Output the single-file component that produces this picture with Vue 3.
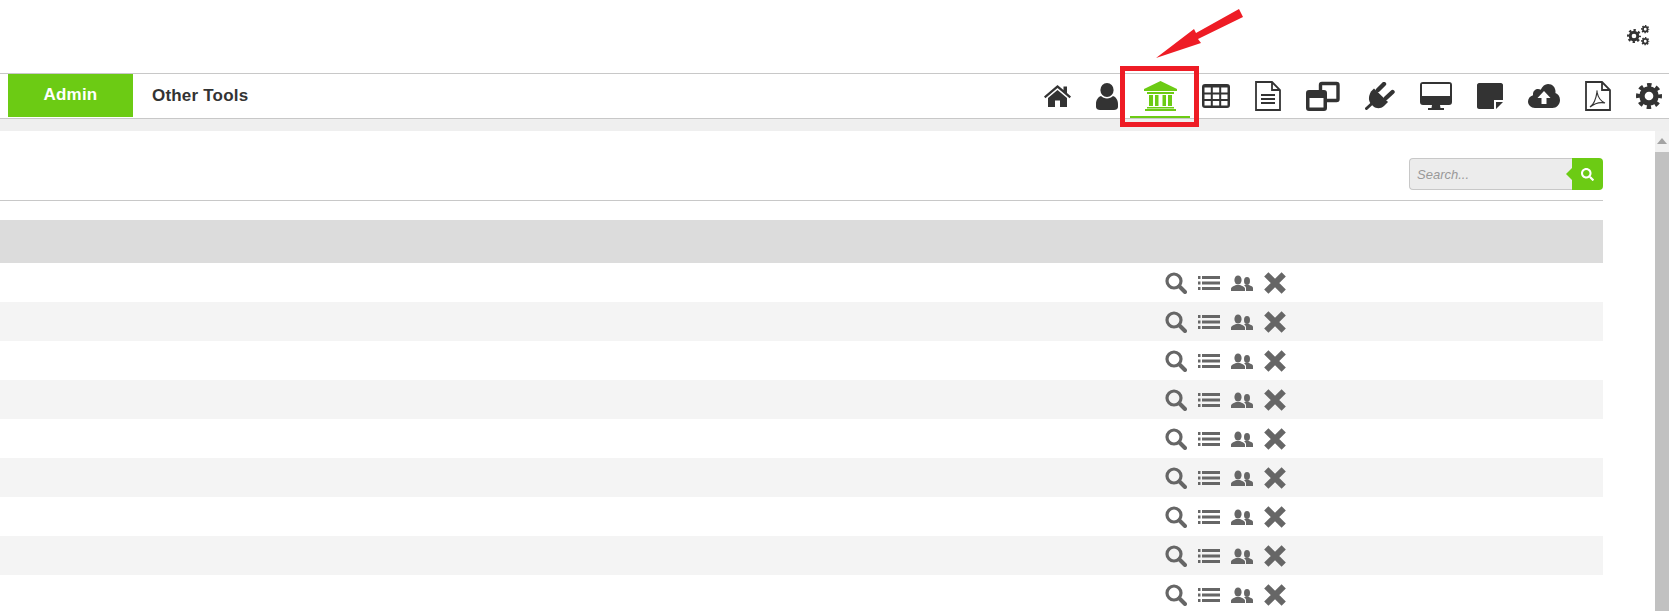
<template>
  <div class="page">
    <header class="top">
      <svg class="gears" viewBox="0 0 23 21" fill="#333">
        <use href="#cog" x="0" y="4" width="14" height="14" />
        <use href="#cog" x="14" y="0" width="8.500" height="8.500" />
        <use href="#cog" x="14" y="12" width="8.500" height="8.500" />
      </svg>
    </header>

    <svg width="0" height="0" class="defs">
      <symbol id="cog" viewBox="0 0 24 24">
        <circle cx="12" cy="12" r="6.500" fill="none" stroke="#333" stroke-width="5" />
        <circle cx="12" cy="12" r="10" fill="none" stroke="#333" stroke-width="4" stroke-dasharray="4 3.850" stroke-dashoffset="2" />
      </symbol>
    </svg>

    <nav class="nav">
      <a class="tab active">Admin</a>
      <a class="tab">Other Tools</a>
      <div class="icons">
        <svg width="27" height="22" viewBox="0 0 27 22" fill="#333"><path d="M13.500 0 0 11.500l1.400 1.700L13.500 3l12.100 10.200 1.400-1.700-4-3.400V1.500h-3.500v3.600zM13.500 5 4 13v9h7v-6.500h5V22h7v-9z" /></svg>
        <svg width="22" height="27" viewBox="0 0 22 27" fill="#333"><ellipse cx="11" cy="7" rx="6.600" ry="7" /><path d="M5 13c-3 1-5 4-5 8v3c0 2 2 3 4 3h14c2 0 4-1 4-3v-3c0-4-2-7-5-8-1.500 1.500-3.500 2.500-6 2.500S6.500 14.500 5 13z" /></svg>
        <a class="bank">
          <svg width="33" height="30" viewBox="0 0 33 30" fill="#6ccb14"><path d="M16.500 0 33 8v2H0V8zM3 11h27v2H3zM5 14h4v11H5zM11 14h3.500v11H11zM18.500 14H22v11h-3.500zM24 14h4v11h-4zM3 26h27v1.500H3zM1 28h31v2H1z" /></svg>
        </a>
        <svg width="28" height="24" viewBox="0 0 28 24"><path d="M3 0h22c2 0 3 1 3 3v18c0 2-1 3-3 3H3c-2 0-3-1-3-3V3c0-2 1-3 3-3zM2.500 3.500v5h6.300v-5zM10.800 3.500v5h6.400v-5zM19.200 3.500v5h6.300v-5zM2.500 10.500v4.500h6.300v-4.500zM10.800 10.500v4.500h6.400v-4.500zM19.200 10.500v4.500h6.300v-4.500zM2.500 17v4.500h6.300V17zM10.800 17v4.500h6.400V17zM19.200 17v4.500h6.300V17z" fill="#333" fill-rule="evenodd" /></svg>
        <svg width="26" height="30" viewBox="0 0 26 30" fill="none" stroke="#333" stroke-width="1.800"><path d="M1 1h16l8 8v20H1zM17 1v8h8" /><path d="M6 14h14M6 18h14M6 22h14" stroke-width="1.800" /></svg>
        <svg width="34" height="30" viewBox="0 0 34 30"><path d="M14.500 9V4c0-1 .5-1.500 1.500-1.500h14.500c1 0 1.500 .5 1.500 1.500v14c0 1-.5 1.500-1.500 1.500H20" fill="none" stroke="#333" stroke-width="3.400" /><path d="M3 9h15c2 0 3 1 3 3v15c0 2-1 3-3 3H3c-2 0-3-1-3-3V12c0-2 1-3 3-3zm.5 8v9.500h14V17z" fill="#333" fill-rule="evenodd" /></svg>
        <svg width="30" height="28" viewBox="0 0 30 28" fill="#333"><path d="M9 6.500 23 20l-4 4c-3.500 3-8 2.500-10.500 .5L6 22c-2.500-3-3-7 0-12.500z" /><path d="M13 8l6-6M21 16l6.500-6" stroke="#333" stroke-width="4.400" stroke-linecap="round" /><path d="M8 20.500 1.500 26.500" stroke="#333" stroke-width="3" stroke-linecap="round" /></svg>
        <svg width="32" height="28" viewBox="0 0 32 28" fill="#333"><path fill-rule="evenodd" d="M3 0h26c2 0 3 1 3 3v17c0 2-1 3-3 3H3c-2 0-3-1-3-3V3c0-2 1-3 3-3zm-1 2v12h28V2z" /><path d="M12 23h8l.5 3H24v2H8v-2h3.500z" /></svg>
        <svg width="26" height="26" viewBox="0 0 26 26" fill="#333"><path d="M2 0h22c1 0 2 1 2 2v15h-9v9H2c-1 0-2-1-2-2V2c0-1 1-2 2-2zM19 19h7l-7 7z" /></svg>
        <svg width="32" height="24" viewBox="0 0 32 24" fill="#333"><path fill-rule="evenodd" d="M7 24c-4 0-7-3-7-6.500C0 14.500 2 12 5 11.200 5 10.800 5 10.500 5 10c0-3 2.500-5 5-5 1 0 2 .3 2.700.8C14.300 2.300 17 0 20 0c4.500 0 7.500 3.500 7.500 7.500 0 .5 0 1-.1 1.500 2.700 1 4.600 3.500 4.600 7 0 4.500-3.500 8-7.500 8zM16 7l-6.500 7h4v6h5v-6h4z" /></svg>
        <svg width="26" height="30" viewBox="0 0 26 30" fill="none" stroke="#333"><path d="M1 1h16l8 8v20H1zM17 1v8h8" stroke-width="1.800" /><path d="M5 26c3-2 6-8 7-15 0-2 0-1 0 0 1 5 3 9 8 11-4-1-10 0-15 4z" stroke-width="1.200" /></svg>
        <svg width="26" height="26" viewBox="0 0 24 24"><use href="#cog" /></svg>
      </div>
      <span class="redbox"></span>
    </nav>

    <svg class="arrow" width="100" height="60" viewBox="0 0 100 60" fill="#ee1c25"><path d="M89 9 93 17 48 39 51 43 6 58 44 29 46 33z" /></svg>

    <div class="band"></div>

    <div class="main">
      <section class="content">
        <div class="toolbar">
          <div class="search">
            <input type="text" placeholder="Search..." />
            <button>
              <svg width="13" height="13" viewBox="0 0 512 512" fill="#fff"><path :d="searchPath" /></svg>
            </button>
          </div>
        </div>
        <div class="table">
          <div class="thead"></div>
          <div v-for="n in 9" :key="n" class="row">
            <div class="actions">
              <svg width="22" height="22" viewBox="0 0 22 22" fill="none" stroke="#666"><circle cx="9" cy="9" r="7" stroke-width="3.200" /><path d="M14.500 14.500 20 20" stroke-width="4" stroke-linecap="round" /></svg>
              <svg width="22" height="16" viewBox="0 0 22 16" fill="#666"><path d="M0 1h2.500v3H0zM4 1h18v3H4zM0 6.500h2.500v3H0zM4 6.500h18v3H4zM0 12h2.500v3H0zM4 12h18v3H4z" /></svg>
              <svg width="22" height="16" viewBox="0 0 22 16" fill="#666"><ellipse cx="7" cy="5" rx="3.600" ry="4.600" /><path d="M0 16v-2.500c0-1.500 3-2.500 5-3.500h4c2 1 5 2 5 3.500V16z" /><ellipse cx="16" cy="6" rx="3" ry="4" /><path d="M15 16v-3c0-1-1-2-2-2.500l1-.5h4c2 1 4 1.500 4 3V16z" /></svg>
              <svg width="22" height="22" viewBox="0 0 22 22"><path d="M2.300 2.300l17.400 17.400M19.700 2.300 2.300 19.700" stroke="#666" stroke-width="6" /></svg>
            </div>
          </div>
        </div>
      </section>
      <aside class="scrollbar">
        <span class="up"></span>
        <span class="thumb"></span>
      </aside>
    </div>
  </div>
</template>

<script setup>
const searchPath = 'M505 442.7L405.3 343c-4.5-4.5-10.6-7-17-7H372c27.6-35.3 44-79.7 44-128C416 93.1 322.9 0 208 0S0 93.1 0 208s93.1 208 208 208c48.3 0 92.7-16.4 128-44v16.3c0 6.4 2.5 12.5 7 17l99.7 99.7c9.4 9.4 24.6 9.4 33.9 0l28.3-28.3c9.4-9.4 9.4-24.6.1-34zM208 336c-70.7 0-128-57.2-128-128 0-70.7 57.2-128 128-128 70.7 0 128 57.2 128 128 0 70.7-57.2 128-128 128z'
</script>

<style>
html, body {
  margin: 0;
  height: 100%;
  overflow: hidden;
  background: #fff;
}
</style>

<style scoped>
.page {
  position: relative;
  height: 611px;
  overflow: hidden;
  font-family: "Liberation Sans", Arial, sans-serif;
}

.defs {
  position: absolute;
}

.top {
  height: 73px;
  display: flex;
  justify-content: flex-end;
  align-items: flex-start;
  padding: 25px 19px 0 0;
  box-sizing: border-box;
}

.gears {
  width: 23px;
  height: 21px;
}

.nav {
  position: relative;
  height: 44px;
  display: flex;
  align-items: stretch;
  padding-left: 8px;
  border-top: 1px solid #c8c8c8;
  border-bottom: 1px solid #c8c8c8;
}

.tab {
  display: flex;
  align-items: center;
  justify-content: center;
  width: 125px;
  padding-bottom: 1px;
  font-size: 17px;
  letter-spacing: 0.2px;
  font-weight: bold;
  color: #333;
}

.tab.active {
  background: #6ccb14;
  color: #fff;
  margin-bottom: 1px;
}

.tab + .tab {
  width: auto;
  margin-left: 19px;
}

.icons {
  margin-left: auto;
  padding-right: 7px;
  display: flex;
  align-items: center;
  gap: 25px;
}

.bank {
  width: 60px;
  height: 100%;
  margin: 0 -13px;
  padding-top: 1px;
  box-sizing: border-box;
  display: flex;
  justify-content: center;
  align-items: center;
  border-bottom: 2px solid #6ccb14;
}

.redbox {
  position: absolute;
  left: 1120px;
  top: -8px;
  width: 79px;
  height: 61px;
  box-sizing: border-box;
  border: 5px solid #ee1c25;
}

.arrow {
  position: absolute;
  left: 1150px;
  top: 0;
}

.band {
  height: 12px;
  background: #efefef;
}

.main {
  display: flex;
}

.content {
  flex: 1;
  padding-right: 50px;
  background: #fff;
}

.toolbar {
  height: 70px;
  box-sizing: border-box;
  padding-top: 27px;
  display: flex;
  justify-content: flex-end;
  border-bottom: 1px solid #c8c8c8;
}

.search {
  display: flex;
  height: 32px;
  width: 194px;
}

.search input {
  flex: 1;
  min-width: 0;
  box-sizing: border-box;
  padding: 0 7px;
  border: 1px solid #c8c8c8;
  border-right: 0;
  border-radius: 4px 0 0 4px;
  background: #ececec;
  font: italic 13px "Liberation Sans", Arial, sans-serif;
  outline: none;
}

.search input::placeholder {
  color: #999;
}

.search button {
  position: relative;
  width: 31px;
  padding: 0;
  border: 0;
  border-radius: 0 4px 4px 0;
  background: #6ccb14;
  display: flex;
  align-items: center;
  justify-content: center;
}

.search button::before {
  content: "";
  position: absolute;
  left: -6px;
  top: 10px;
  border: 6px solid transparent;
  border-left: 0;
  border-right-color: #6ccb14;
}

.table {
  margin-top: 19px;
}

.thead {
  height: 43px;
  background: #dcdcdc;
}

.row {
  height: 39px;
  display: flex;
  align-items: center;
  padding-left: 1165px;
}

.row:nth-child(odd) {
  background: #f4f4f4;
}

.actions {
  display: flex;
  align-items: center;
  gap: 11px;
}

.scrollbar {
  width: 14px;
  margin-left: 2px;
  height: 480px;
  background: #f1f1f1;
  display: flex;
  flex-direction: column;
  align-items: center;
}

.up {
  margin-top: 7px;
  border: 5px solid transparent;
  border-top: 0;
  border-bottom: 6px solid #a3a3a3;
}

.thumb {
  margin-top: 8px;
  flex: 1;
  width: 100%;
  background: #c1c1c1;
}
</style>
